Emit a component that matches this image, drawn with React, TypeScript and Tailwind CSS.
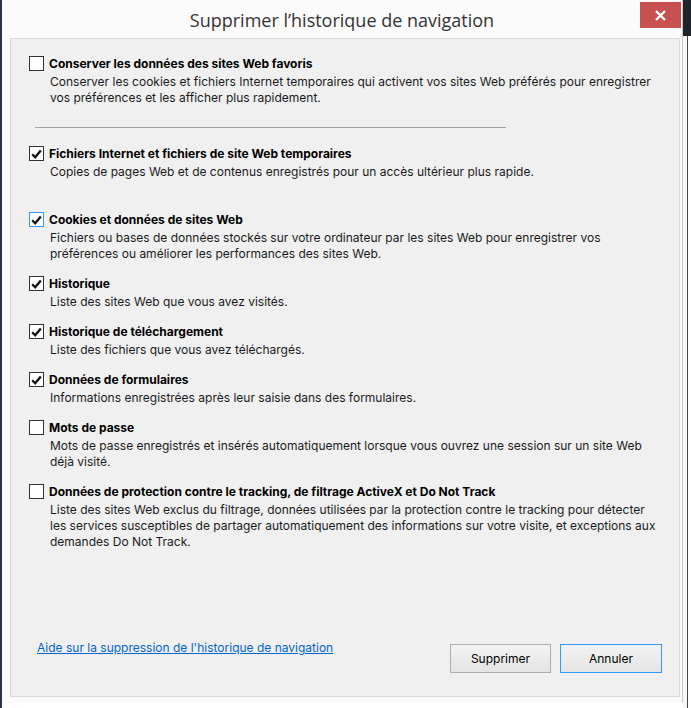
import React from 'react'

type OptionProps = {
  checked?: boolean
  focused?: boolean
  title: string
  lines: string[]
  className?: string
}

const Check = () => (
  <svg width="11" height="10" viewBox="0 0 11 10" className="block">
    <path d="M1.2 5.2 L4.2 8.2 L9.8 1.6" fill="none" stroke="#111" strokeWidth="2.3" />
  </svg>
)

const Option = ({ checked, focused, title, lines, className }: OptionProps) => (
  <div className={`flex items-start ${className ?? ''}`}>
    <div
      className={`mt-[1px] flex h-[15px] w-[15px] shrink-0 items-center justify-center border bg-white ${
        focused ? 'border-[#3399ff]' : 'border-[#333333]'
      }`}
    >
      {checked && <Check />}
    </div>
    <div className="ml-[5px] flex flex-col pt-[1px]">
      <div className="whitespace-nowrap text-[12px] font-bold leading-[16px] text-black">{title}</div>
      <div className="mt-[2px] pl-[1px]">
        {lines.map((l) => (
          <div key={l} className="whitespace-nowrap text-[12px] leading-[16px] text-[#1a1a1a]">
            {l}
          </div>
        ))}
      </div>
    </div>
  </div>
)

export default function App() {
  return (
    <div
      className="flex h-[708px] w-[691px] overflow-hidden bg-white"
      style={{ fontFamily: 'Inter, "Open Sans", sans-serif' }}
    >
      {/* page behind, left edge */}
      <div className="h-full w-[2px] bg-[#2c3642]" />

      {/* dialog window */}
      <div className="relative flex h-[703px] w-[681px] flex-col border-r border-[#c8c8c8] bg-[#fbfbfb]">
        {/* title bar */}
        <div className="flex h-[38px] items-start justify-center pt-[8px]">
          <div
            className="text-[18px] leading-[24px] text-[#333333]"
            style={{ fontFamily: '"Open Sans", sans-serif' }}
          >
            Supprimer l’historique de navigation
          </div>
        </div>
        <div className="absolute right-[1px] top-[2px] flex h-[26px] w-[41px] items-center justify-center bg-[#c75050]">
          <svg width="11" height="11" viewBox="0 0 11 11">
            <path d="M1 1 L10 10 M10 1 L1 10" stroke="#fff" strokeWidth="2.4" />
          </svg>
        </div>

        {/* client area */}
        <div className="ml-[8px] flex h-[659px] w-[670px] flex-col border border-[#d9d9d9] bg-[#f0f0f0] pl-[18px] pt-[16px]">
          <Option
            title="Conserver les données des sites Web favoris"
            lines={[
              'Conserver les cookies et fichiers Internet temporaires qui activent vos sites Web préférés pour enregistrer',
              'vos préférences et les afficher plus rapidement.',
            ]}
          />
          <div className="ml-[6px] mt-[21px] h-px w-[471px] bg-[#a0a0a0]" />
          <Option
            className="mt-[17px]"
            checked
            title="Fichiers Internet et fichiers de site Web temporaires"
            lines={['Copies de pages Web et de contenus enregistrés pour un accès ultérieur plus rapide.']}
          />
          <Option
            className="mt-[31px]"
            checked
            focused
            title="Cookies et données de sites Web"
            lines={[
              'Fichiers ou bases de données stockés sur votre ordinateur par les sites Web pour enregistrer vos',
              'préférences ou améliorer les performances des sites Web.',
            ]}
          />
          <Option
            className="mt-[13px]"
            checked
            title="Historique"
            lines={['Liste des sites Web que vous avez visités.']}
          />
          <Option
            className="mt-[13px]"
            checked
            title="Historique de téléchargement"
            lines={['Liste des fichiers que vous avez téléchargés.']}
          />
          <Option
            className="mt-[13px]"
            checked
            title="Données de formulaires"
            lines={['Informations enregistrées après leur saisie dans des formulaires.']}
          />
          <Option
            className="mt-[13px]"
            title="Mots de passe"
            lines={[
              'Mots de passe enregistrés et insérés automatiquement lorsque vous ouvrez une session sur un site Web',
              'déjà visité.',
            ]}
          />
          <Option
            className="mt-[13px]"
            title="Données de protection contre le tracking, de filtrage ActiveX et Do Not Track"
            lines={[
              'Liste des sites Web exclus du filtrage, données utilisées par la protection contre le tracking pour détecter',
              'les services susceptibles de partager automatiquement des informations sur votre visite, et exceptions aux',
              'demandes Do Not Track.',
            ]}
          />

          {/* footer */}
          <div className="mt-auto flex items-start justify-between pb-[23px] pr-[17px]">
            <a className="ml-[8px] mt-[1px] cursor-pointer text-[12px] leading-[16px] text-[#0066cc] underline">
              Aide sur la suppression de l'historique de navigation
            </a>
            <div className="mt-[5px] flex gap-[9px]">
              <button className="h-[29px] w-[101px] border border-[#adadad] bg-gradient-to-b from-[#f2f2f2] to-[#e5e5e5] text-[12px] text-black">
                Supprimer
              </button>
              <button className="h-[29px] w-[102px] border border-[#3399ff] bg-gradient-to-b from-[#f2f2f2] to-[#e5e5e5] text-[12px] text-black">
                Annuler
              </button>
            </div>
          </div>
        </div>
      </div>

      {/* page behind, right edge */}
      <div className="flex h-full w-[8px] flex-col">
        <div className="h-[36px] bg-[#1f252b]" />
        <div className="flex flex-1">
          <div className="w-[4px] bg-[#f7f7f7]" />
          <div className="w-px bg-[#444444]" />
          <div className="flex-1 bg-white" />
        </div>
      </div>
    </div>
  )
}
